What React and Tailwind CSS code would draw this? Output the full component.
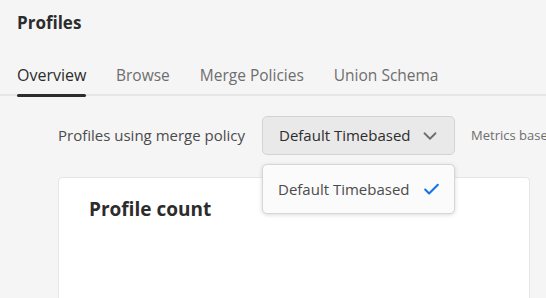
import React from 'react';
import { ChevronDown, Check } from 'lucide-react';

const tabs = ['Overview', 'Browse', 'Merge Policies', 'Union Schema'];

export default function App() {
  return (
    <div className="w-[546px] h-[298px] overflow-hidden bg-[#f5f5f5] text-[#2c2c2c]" style={{ fontFamily: '"Open Sans", "Noto Sans", sans-serif' }}>
      <h1 className="pl-[17px] pt-[11px] text-[17px] font-bold leading-[24px] text-[#2c2c2c]">Profiles</h1>

      <div className="mt-[29px] flex gap-[30px] px-[17px] border-b-2 border-[#e6e6e6]">
        {tabs.map((t, i) => (
          <div key={t} className={`relative pb-[8px] leading-[22px] whitespace-nowrap ${i === 0 ? 'w-[69px] text-[16px] text-[#2c2c2c]' : 'text-[15.5px] text-[#6e6e6e]'}`}>
            {t}
            {i === 0 && <div className="absolute left-0 right-0 -bottom-[3px] h-[3px] rounded-sm bg-[#2c2c2c]" />}
          </div>
        ))}
      </div>

      <div className="relative pl-[58px] pt-[20px]">
        <div className="flex items-center h-[39px]">
          <span className="shrink-0 text-[15px] text-[#4b4b4b] w-[204px]">Profiles using merge policy</span>
          <button className="shrink-0 flex items-center justify-between w-[193px] h-[39px] pl-[16px] pr-[13px] rounded-[5px] border border-[#d3d3d3] bg-[#e9e9e9] text-[15px] text-[#2c2c2c]">
            Default Timebased
            <ChevronDown size={22} strokeWidth={2} className="text-[#6e6e6e]" />
          </button>
          <span className="shrink-0 ml-[16px] text-[13px] text-[#6e6e6e] whitespace-nowrap">Metrics based on</span>
        </div>

        <div className="mt-[22px] w-[472px] h-[200px] bg-white border border-[#e6e6e6] rounded-[4px] pl-[30px] pt-[17px]">
          <h2 className="text-[19px] font-bold text-[#2c2c2c]">Profile count</h2>
        </div>

        <div className="absolute left-[262px] top-[68px] w-[193px] h-[50px] bg-[#fbfbfb] border border-[#d6d6d6] rounded-[5px] shadow-[0_1px_4px_rgba(0,0,0,0.15)] flex items-center justify-between pl-[15px] pr-[13px]">
          <span className="text-[15px] text-[#4b4b4b]">Default Timebased</span>
          <Check size={19} strokeWidth={2.6} className="text-[#1473e6]" />
        </div>
      </div>
    </div>
  );
}
